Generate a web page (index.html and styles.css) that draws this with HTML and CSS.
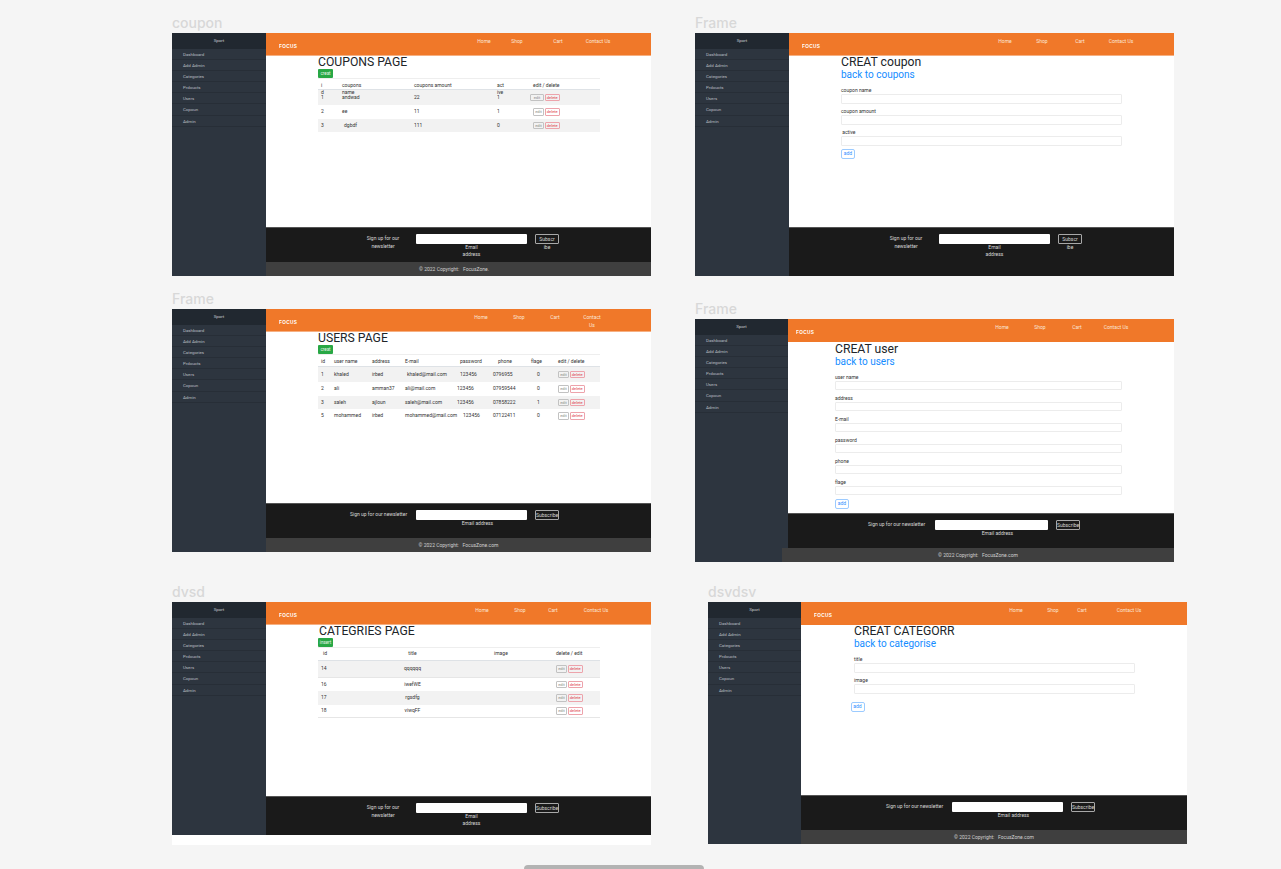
FILE: index.html
```html
<!DOCTYPE html>
<html lang="en">
<head>
    <meta charset="UTF-8">
    <title>Dashboard frames</title>
    <link rel="stylesheet" href="styles.css">
</head>
<body>
    <!-- coupons list -->
    <section class="frame f1">
        <p class="frame-label">coupon</p>
        <div class="frame-body">
            <aside class="sidebar">
                <div class="side-title">Sport</div>
                <a>Dashboard</a><a>Add Admin</a><a>Categories</a><a>Prdoucts</a><a>Users</a><a>Copoun</a><a>Admin</a>
            </aside>
            <div class="main">
                <header class="topbar">
                    <div class="logo"><span>FOCUS</span></div>
                    <nav class="nav"><a>Home</a><a>Shop</a><a>Cart</a><a>Contact Us</a></nav>
                </header>
                <div class="content">
                    <h1 class="page-title">COUPONS PAGE</h1>
                    <a class="btn-create">creat</a>
                    <div class="table coupons">
                        <div class="row head"><span>i<br>d</span><span>coupons<br>name</span><span>coupons amount</span><span>act<br>ive</span><span>edit / delete</span></div>
                        <div class="row tall alt"><span>1</span><span>andwad</span><span>22</span><span>1</span><span class="actions pull"><a class="btn-edit wide">edit</a><a class="btn-delete">delete</a></span></div>
                        <div class="row"><span>2</span><span>ee</span><span>11</span><span>1</span><span class="actions"><a class="btn-edit">edit</a><a class="btn-delete">delete</a></span></div>
                        <div class="row alt"><span>3</span><span class="n2">dgbdf</span><span>111</span><span>0</span><span class="actions"><a class="btn-edit">edit</a><a class="btn-delete">delete</a></span></div>
                    </div>
                </div>
                <footer class="news">
                    <div class="signup wrapped">Sign up for our<br>newsletter</div>
                    <div class="email"><div class="email-box"></div><small>Email<br>address</small></div>
                    <div class="sub"><a class="btn-sub">Subscr</a><small>ibe</small></div>
                </footer>
                <div class="copy">© 2022 Copyright: &nbsp; FocusZone.</div>
            </div>
        </div>
    </section>

    <!-- create coupon -->
    <section class="frame f2">
        <p class="frame-label">Frame</p>
        <div class="frame-body">
            <aside class="sidebar">
                <div class="side-title">Sport</div>
                <a>Dashboard</a><a>Add Admin</a><a>Categories</a><a>Prdoucts</a><a>Users</a><a>Copoun</a><a>Admin</a>
            </aside>
            <div class="main">
                <header class="topbar">
                    <div class="logo"><span>FOCUS</span></div>
                    <nav class="nav"><a>Home</a><a>Shop</a><a>Cart</a><a>Contact Us</a></nav>
                </header>
                <div class="content">
                    <h1 class="page-title">CREAT coupon</h1>
                    <a class="back">back to coupons</a>
                    <form class="form">
                        <label>coupon name</label><div class="field"></div>
                        <label>coupon amount</label><div class="field"></div>
                        <label>&nbsp;active</label><div class="field"></div>
                        <a class="btn-add">add</a>
                    </form>
                </div>
                <footer class="news open">
                    <div class="signup wrapped">Sign up for our<br>newsletter</div>
                    <div class="email"><div class="email-box"></div><small>Email<br>address</small></div>
                    <div class="sub"><a class="btn-sub">Subscr</a><small>ibe</small></div>
                </footer>
            </div>
        </div>
    </section>

    <!-- users list -->
    <section class="frame f3">
        <p class="frame-label">Frame</p>
        <div class="frame-body">
            <aside class="sidebar">
                <div class="side-title">Sport</div>
                <a>Dashboard</a><a>Add Admin</a><a>Categories</a><a>Prdoucts</a><a>Users</a><a>Copoun</a><a>Admin</a>
            </aside>
            <div class="main">
                <header class="topbar">
                    <div class="logo"><span>FOCUS</span></div>
                    <nav class="nav"><a>Home</a><a>Shop</a><a>Cart</a><a>Contact<br>Us</a></nav>
                </header>
                <div class="content">
                    <h1 class="page-title">USERS PAGE</h1>
                    <a class="btn-create">creat</a>
                    <div class="table users">
                        <div class="row head"><span>id</span><span>user name</span><span>address</span><span>E-mail</span><span class="n3">password</span><span class="n5">phone</span><span>flage</span><span>edit / delete</span></div>
                        <div class="row tall alt"><span>1</span><span>khaled</span><span>irbed</span><span class="n2">khaled@mail.com</span><span class="n3">123456</span><span>0796955</span><span class="n6">0</span><span class="actions"><a class="btn-edit">edit</a><a class="btn-delete">delete</a></span></div>
                        <div class="row"><span>2</span><span>ali</span><span>amman37</span><span>ali@mail.com</span><span>123456</span><span>07959544</span><span class="n6">0</span><span class="actions"><a class="btn-edit">edit</a><a class="btn-delete">delete</a></span></div>
                        <div class="row alt"><span>3</span><span>saleh</span><span>ajloun</span><span>saleh@mail.com</span><span>123456</span><span>07858222</span><span class="n6">1</span><span class="actions"><a class="btn-edit">edit</a><a class="btn-delete">delete</a></span></div>
                        <div class="row"><span>5</span><span>mohammed</span><span>irbed</span><span>mohammed@mail.com</span><span class="n6">123456</span><span>07122411</span><span class="n6">0</span><span class="actions"><a class="btn-edit">edit</a><a class="btn-delete">delete</a></span></div>
                    </div>
                </div>
                <footer class="news">
                    <div class="signup">Sign up for our newsletter</div>
                    <div class="email"><div class="email-box"></div><small class="off">Email address</small></div>
                    <div class="sub"><a class="btn-sub">Subscribe</a></div>
                </footer>
                <div class="copy">© 2022 Copyright: &nbsp; FocusZone.com</div>
            </div>
        </div>
    </section>

    <!-- create user -->
    <section class="frame f4">
        <p class="frame-label">Frame</p>
        <div class="frame-body">
            <aside class="sidebar">
                <div class="side-title">Sport</div>
                <a>Dashboard</a><a>Add Admin</a><a>Categories</a><a>Prdoucts</a><a>Users</a><a>Copoun</a><a>Admin</a>
            </aside>
            <div class="main">
                <header class="topbar">
                    <div class="logo"><span>FOCUS</span></div>
                    <nav class="nav"><a>Home</a><a>Shop</a><a>Cart</a><a>Contact Us</a></nav>
                </header>
                <div class="content">
                    <h1 class="page-title">CREAT user</h1>
                    <a class="back">back to users</a>
                    <form class="form">
                        <label>user name</label><div class="field"></div>
                        <label>address</label><div class="field"></div>
                        <label>E-mail</label><div class="field"></div>
                        <label>password</label><div class="field"></div>
                        <label>phone</label><div class="field"></div>
                        <label>flage</label><div class="field"></div>
                        <a class="btn-add">add</a>
                    </form>
                </div>
                <footer class="news">
                    <div class="signup">Sign up for our newsletter</div>
                    <div class="email"><div class="email-box"></div><small class="off">Email address</small></div>
                    <div class="sub"><a class="btn-sub">Subscribe</a></div>
                </footer>
                <div class="copy">© 2022 Copyright: &nbsp; FocusZone.com</div>
            </div>
        </div>
    </section>

    <!-- categories list -->
    <section class="frame f5">
        <p class="frame-label">dvsd</p>
        <div class="frame-body">
            <aside class="sidebar">
                <div class="side-title">Sport</div>
                <a>Dashboard</a><a>Add Admin</a><a>Categories</a><a>Prdoucts</a><a>Users</a><a>Copoun</a><a>Admin</a>
            </aside>
            <div class="main">
                <header class="topbar">
                    <div class="logo"><span>FOCUS</span></div>
                    <nav class="nav"><a>Home</a><a>Shop</a><a>Cart</a><a>Contact Us</a></nav>
                </header>
                <div class="content">
                    <h1 class="page-title">CATEGRIES PAGE</h1>
                    <a class="btn-create">insert</a>
                    <div class="table cats">
                        <div class="row head"><span class="n2">id</span><span class="mid">title</span><span>image</span><span>delete / edit</span></div>
                        <div class="row tall alt"><span>14</span><span class="mid">qqqqqq</span><span></span><span class="actions"><a class="btn-edit">edit</a><a class="btn-delete">delete</a></span></div>
                        <div class="row"><span>16</span><span class="mid">iwefWE</span><span></span><span class="actions"><a class="btn-edit">edit</a><a class="btn-delete">delete</a></span></div>
                        <div class="row alt"><span>17</span><span class="mid">rgsdfg</span><span></span><span class="actions"><a class="btn-edit">edit</a><a class="btn-delete">delete</a></span></div>
                        <div class="row last"><span>18</span><span class="mid">viwqFF</span><span></span><span class="actions"><a class="btn-edit">edit</a><a class="btn-delete">delete</a></span></div>
                    </div>
                </div>
                <footer class="news mid-height">
                    <div class="signup wrapped">Sign up for our<br>newsletter</div>
                    <div class="email"><div class="email-box"></div><small>Email<br>address</small></div>
                    <div class="sub"><a class="btn-sub">Subscribe</a></div>
                </footer>
            </div>
        </div>
    </section>

    <!-- create category -->
    <section class="frame f6">
        <p class="frame-label">dsvdsv</p>
        <div class="frame-body">
            <aside class="sidebar">
                <div class="side-title">Sport</div>
                <a>Dashboard</a><a>Add Admin</a><a>Categories</a><a>Prdoucts</a><a>Users</a><a>Copoun</a><a>Admin</a>
            </aside>
            <div class="main">
                <header class="topbar">
                    <div class="logo"><span>FOCUS</span></div>
                    <nav class="nav"><a>Home</a><a>Shop</a><a>Cart</a><a>Contact Us</a></nav>
                </header>
                <div class="content">
                    <h1 class="page-title">CREAT CATEGORR</h1>
                    <a class="back">back to categorise</a>
                    <form class="form">
                        <label>title</label><div class="field"></div>
                        <label>image</label><div class="field"></div>
                        <a class="btn-add">add</a>
                    </form>
                </div>
                <footer class="news">
                    <div class="signup">Sign up for our newsletter</div>
                    <div class="email"><div class="email-box"></div><small class="off">Email address</small></div>
                    <div class="sub"><a class="btn-sub">Subscribe</a></div>
                </footer>
                <div class="copy">© 2022 Copyright: &nbsp; FocusZone.com</div>
            </div>
        </div>
    </section>

    <div class="scroll-thumb"></div>
</body>
</html>
```

FILE: styles.css
```css
* {
    box-sizing: border-box;
}
html, body {
    height: 100%;
}
body {
    margin: 0;
    background: #f5f5f5;
    font-family: Roboto, "Liberation Sans", sans-serif;
    overflow: hidden;
    position: relative;
}

/* frames sit on a free canvas */
.frame {
    position: absolute;
    width: 479px;
    height: 243px;
    background: #fff;
    --side: 94px;
    --left: 52px;
    --logo-left: 13px;
    --sign-left: 84px;
    --input-left: 150px;
    --input-w: 111px;
}
.f1 { left: 172px; top: 33px; --m1: 14px; --m2: 5px; --m3: 13px; --m4: 12px; }
.f2 { left: 695px; top: 33px; --m1: 12px; --m2: 9px; --m3: 10px; --m4: 13px; }
.f3 { left: 172px; top: 309px; --m1: 11px; --m2: 10px; --m3: 8px; --m4: 9px; }
.f4 { left: 695px; top: 319px; --m1: 10px; --m2: 10px; --m3: 9px; --m4: 11px; --side: 93px; --left: 47px; --logo-left: 8px; --sign-left: 80px; --input-left: 147px; --input-w: 113px; }
.f5 { left: 172px; top: 602px; --m1: 12px; --m2: 10px; --m3: 5px; --m4: 15px; }
.f6 { left: 708px; top: 602px; height: 242px; --m1: 11px; --m2: 9px; --m3: 1px; --m4: 19px; --side: 93px; --left: 53px; --sign-left: 85px; --input-left: 151px; }

.frame-label {
    position: absolute;
    left: 0;
    top: -19px;
    margin: 0;
    font: 500 14px/17px Inter, Roboto, sans-serif;
    color: #d8d8d8;
}
.frame-body {
    display: flex;
    height: 100%;
}
.f5 .frame-body {
    height: 233px;
}

/* sidebar */
.sidebar {
    flex: none;
    width: var(--side);
    background: #2d353f;
    font-size: 4.4px;
}
.side-title {
    height: 15.5px;
    line-height: 15px;
    text-align: center;
    background: #212830;
    color: #c9cdd1;
}
.sidebar a {
    display: block;
    height: 11.2px;
    line-height: 11.5px;
    padding-left: 11px;
    color: #b9bdc2;
    border-bottom: 1px solid #272e37;
}

/* main column */
.main {
    flex: 1;
    min-width: 0;
    display: flex;
    flex-direction: column;
}
.topbar {
    flex: none;
    height: 23px;
    display: flex;
    background: #f07829;
    border-bottom: 1px solid #f6b082;
    color: #fff;
}
.f4 .topbar, .f6 .topbar {
    border-bottom: none;
}
.logo {
    flex: none;
    width: 190px;
    padding: 10px 0 0 var(--logo-left);
    font: 700 6px/7px "Liberation Sans", sans-serif;
    letter-spacing: .5px;
}
.logo span {
    display: inline-block;
    transform: scaleX(.78);
    transform-origin: left center;
}
.nav {
    display: flex;
    padding-top: 5px;
    font-size: 5px;
    line-height: 7.5px;
    color: #fbe6d8;
}
.nav a {
    width: 28px;
    text-align: center;
}
.nav a:nth-child(1) { margin-left: var(--m1); }
.nav a:nth-child(2) { margin-left: var(--m2); }
.nav a:nth-child(3) { margin-left: var(--m3); }
.nav a:nth-child(4) { margin-left: var(--m4); }

.content {
    flex: 1;
    min-height: 0;
    padding-left: var(--left);
    color: #333;
}
.page-title {
    margin: 0;
    font-size: 12.2px;
    font-weight: 400;
    line-height: 13px;
    color: #212529;
}
.f5 .page-title {
    padding-left: 1px;
}
.f4 .page-title {
    padding-top: 1px;
    line-height: 12.5px;
}
.btn-create {
    display: block;
    width: 15px;
    height: 9px;
    background: #28a745;
    border-radius: 1px;
    color: #e6f4e9;
    font-size: 4.5px;
    line-height: 9px;
    text-align: center;
}

/* tables */
.table {
    width: 282px;
    font-size: 5px;
    line-height: 7px;
    border-top: 1px solid #eee;
}
.row {
    display: grid;
    height: 13.5px;
    padding-left: 3px;
    align-items: center;
}
.row.tall {
    height: 15px;
}
.row.alt {
    background: #f2f2f2;
}
.row.head {
    height: 11px;
    align-items: start;
    padding-top: 3px;
    border-bottom: 1px solid #dee2e6;
}
.users .row.head {
    height: 12px;
}
.cats .row.head {
    height: 13px;
    padding-top: 2px;
}
.cats .row.tall {
    height: 16.5px;
    border-bottom: 1px solid #e6e6e6;
}
.row.last {
    border-bottom: 1px solid #e6e6e6;
}
.coupons .row { grid-template-columns: 21px 72px 83px 36px 1fr; }
.users .row { grid-template-columns: 13px 38px 33px 52px 36px 38px 27px 1fr; }
.cats .row { grid-template-columns: 19px 154px 62px 1fr; }
.n2 { padding-left: 2px; }
.n3 { padding-left: 3px; }
.n5 { padding-left: 5px; }
.n6 { padding-left: 6px; }
.mid {
    text-align: center;
    padding-right: 9px;
}
.row span {
    white-space: nowrap;
}
.actions {
    display: flex;
    gap: 1px;
}
.actions.pull {
    margin-left: -3px;
}
.btn-edit, .btn-delete {
    display: block;
    height: 7.5px;
    line-height: 6px;
    font-size: 4px;
    text-align: center;
    border: 1px solid #c2c2c2;
    border-radius: 1px;
    color: #8a8a8a;
}
.btn-edit {
    width: 11px;
}
.btn-edit.wide {
    width: 14px;
}
.btn-delete {
    width: 14.5px;
    border-color: #eda3ab;
    color: #dc3545;
}

/* forms */
.back {
    display: block;
    font-size: 10px;
    line-height: 12px;
    color: #148cff;
}
.form {
    padding-top: 6px;
    width: 281px;
}
.f4 .form {
    width: 287px;
}
.form label {
    display: block;
    height: 7px;
    font-size: 5px;
    line-height: 6px;
    color: #333;
}
.field {
    height: 9.5px;
    margin-bottom: 4.5px;
    border: 1px solid #ececec;
    border-radius: 1px;
    background: #fff;
}
.btn-add {
    display: block;
    width: 14px;
    height: 10px;
    margin-top: -1px;
    border: 1px solid #9ccbff;
    border-radius: 2px;
    color: #2f8fff;
    font-size: 5px;
    line-height: 7px;
    text-align: center;
}
.f6 .btn-add {
    margin: 8px 0 0 -3.5px;
}

/* newsletter */
.news {
    flex: none;
    height: 35px;
    display: flex;
    align-items: flex-start;
    padding-top: 6px;
    background: #1a1a1a;
    border-top: 1px solid #555;
    color: #d8d8d8;
    font-size: 5px;
    line-height: 7.5px;
}
.news.open {
    height: 49px;
}
.news.mid-height {
    height: 39px;
}
.signup {
    flex: none;
    width: var(--input-left);
    padding: 1px 0 0 var(--sign-left);
    white-space: nowrap;
}
.signup.wrapped {
    text-align: center;
}
.email {
    flex: none;
    width: var(--input-w);
    text-align: center;
}
.email-box {
    height: 9.5px;
    background: #fff;
    border-radius: 1px;
}
.news small {
    display: block;
    font-size: 5px;
}
.news small.off {
    padding-left: 12px;
}
.sub {
    flex: none;
    width: 24px;
    margin-left: 8px;
    text-align: center;
}
.btn-sub {
    display: block;
    height: 9.5px;
    line-height: 8px;
    border: 1px solid #a8a8a8;
    border-radius: 1px;
}
.copy {
    flex: none;
    height: 14px;
    line-height: 14px;
    background: #3f3f3f;
    color: #d0d0d0;
    font-size: 5px;
    text-align: center;
}
.f1 .copy {
    padding-right: 9px;
}
.f4 .copy {
    margin-left: -6px;
}

.scroll-thumb {
    position: absolute;
    left: 524px;
    top: 865px;
    width: 180px;
    height: 8px;
    border-radius: 4px;
    background: #b3b3b3;
}
```
